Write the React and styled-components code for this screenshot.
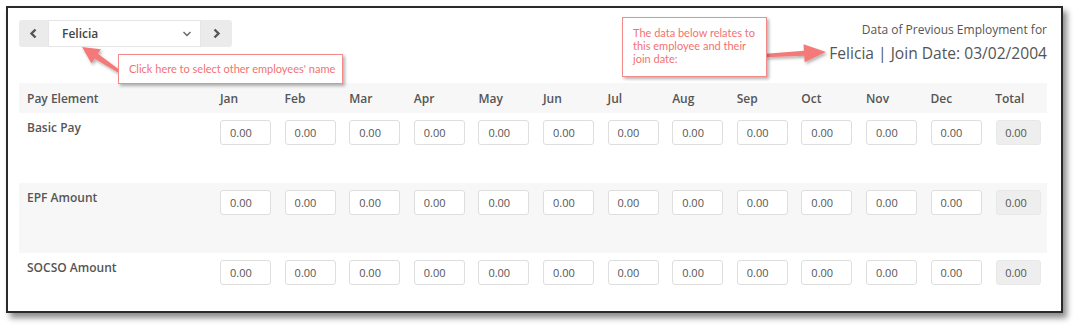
import styled, { createGlobalStyle } from "styled-components";

const GlobalStyle = createGlobalStyle`
  body {
    margin: 0;
    background: #fff;
    font-family: "Open Sans", "Noto Sans", sans-serif;
    color: #555;
  }
`;

const Page = styled.div`
  width: 1082px;
  height: 332px;
  padding: 6px 0 0 6px;
  box-sizing: border-box;
`;

const Frame = styled.div`
  position: relative;
  width: 1057px;
  height: 307px;
  box-sizing: border-box;
  border: 2px solid #2a2a2a;
  box-shadow: 4px 5px 6px rgba(0, 0, 0, 0.45);
  background: #fff;
  overflow: hidden;
  padding: 12px 14px 0 11px;
`;

const TopBar = styled.div`
  display: flex;
  justify-content: space-between;
  align-items: flex-start;
  height: 63px;
`;

const Picker = styled.div`
  display: flex;
  height: 27px;
`;

const NavButton = styled.button`
  width: ${(p) => p.$w}px;
  border: none;
  background: #ebebeb;
  border-radius: ${(p) => (p.$side === "left" ? "3px 0 0 3px" : "0 3px 3px 0")};
  display: flex;
  align-items: center;
  justify-content: center;
  padding: 0;
  color: #555;
`;

const Select = styled.div`
  width: 153px;
  box-sizing: border-box;
  border: 1px solid #e6e6e6;
  background: #fff;
  display: flex;
  align-items: center;
  justify-content: space-between;
  padding: 0 8px 0 13px;
  font-size: 12px;
  font-weight: 600;
  color: #444;
`;

const Heading = styled.div`
  text-align: right;
  padding-top: 1px;
`;

const HeadingSmall = styled.div`
  font-size: 12px;
  line-height: 17px;
  color: #555;
`;

const HeadingBig = styled.div`
  font-size: 15.6px;
  line-height: 22px;
  margin-top: 4px;
  color: #555;
`;

const Grid = styled.div`
  display: grid;
  grid-template-columns: 201px repeat(12, 64.6px) 1fr;
`;

const Row = styled.div`
  display: contents;
`;

const Cell = styled.div`
  background: ${(p) => p.$bg};
  height: ${(p) => p.$h}px;
  box-sizing: border-box;
  padding: ${(p) => (p.$head ? "0" : "7px 0 0 0")};
  display: flex;
  align-items: ${(p) => (p.$head ? "center" : "flex-start")};
  padding-left: ${(p) => (p.$label ? "8px" : "0")};
  font-size: 12px;
  font-weight: 600;
  color: #555;
`;

const LabelText = styled.span`
  line-height: 16px;
`;

const Amount = styled.div`
  width: ${(p) => (p.$total ? 45 : 51)}px;
  height: 25px;
  box-sizing: border-box;
  border: 1px solid ${(p) => (p.$total ? "#e8e8e8" : "#dedede")};
  border-radius: 3px;
  background: ${(p) => (p.$total ? "#eeeeee" : "#fff")};
  font-size: 11px;
  font-weight: 400;
  color: #555;
  display: flex;
  align-items: center;
  padding-left: ${(p) => (p.$total ? 8 : 9)}px;
  margin-left: ${(p) => (p.$total ? 1 : 0)}px;
`;

const Callout = styled.div`
  position: absolute;
  left: ${(p) => p.$x}px;
  top: ${(p) => p.$y}px;
  width: ${(p) => p.$w}px;
  height: ${(p) => p.$h}px;
  box-sizing: border-box;
  border: 1px solid #f48a8a;
  background: #fff;
  box-shadow: 2px 2px 3px rgba(0, 0, 0, 0.3);
  color: #f37272;
  font-family: "Lato", "Noto Sans", sans-serif;
  font-size: 11px;
  line-height: 13px;
  padding: ${(p) => p.$pad};
`;

const Overlay = styled.svg`
  position: absolute;
  left: 0;
  top: 0;
  pointer-events: none;
`;

const months = ["Jan", "Feb", "Mar", "Apr", "May", "Jun", "Jul", "Aug", "Sep", "Oct", "Nov", "Dec"];
const rows = [
  { name: "Basic Pay", bg: "#fff" },
  { name: "EPF Amount", bg: "#f7f7f7" },
  { name: "SOCSO Amount", bg: "#fff" },
];

// build a tapered arrow polygon from tail to tip
function arrowPoints(tx, ty, px, py, headLen, headW, tailW, neckW) {
  const len = Math.hypot(px - tx, py - ty);
  const dx = (px - tx) / len;
  const dy = (py - ty) / len;
  const nx = -dy;
  const ny = dx;
  const bx = px - dx * headLen;
  const by = py - dy * headLen;
  const pts = [
    [tx + nx * tailW, ty + ny * tailW],
    [bx + nx * neckW, by + ny * neckW],
    [bx + nx * headW, by + ny * headW],
    [px, py],
    [bx - nx * headW, by - ny * headW],
    [bx - nx * neckW, by - ny * neckW],
    [tx - nx * tailW, ty - ny * tailW],
  ];
  return pts.map((p) => p.map((v) => v.toFixed(1)).join(",")).join(" ");
}

function Chevron({ dir }) {
  const d = dir === "left" ? "M6.5 1.5 L2.5 5.5 L6.5 9.5" : dir === "right" ? "M2.5 1.5 L6.5 5.5 L2.5 9.5" : "M1.5 3 L5 6.5 L8.5 3";
  return (
    <svg width={dir === "down" ? 10 : 9} height="11" viewBox={dir === "down" ? "0 0 10 9" : "0 0 9 11"}>
      <path d={d} fill="none" stroke={dir === "down" ? "#666" : "#555"} strokeWidth={dir === "down" ? 1.4 : 2.4} />
    </svg>
  );
}

export default function App() {
  return (
    <Page>
      <GlobalStyle />
      <Frame>
        <TopBar>
          <Picker>
            <NavButton $w={29} $side="left">
              <Chevron dir="left" />
            </NavButton>
            <Select>
              Felicia
              <Chevron dir="down" />
            </Select>
            <NavButton $w={31} $side="right">
              <Chevron dir="right" />
            </NavButton>
          </Picker>
          <Heading>
            <HeadingSmall>Data of Previous Employment for</HeadingSmall>
            <HeadingBig>Felicia | Join Date: 03/02/2004</HeadingBig>
          </Heading>
        </TopBar>

        <Grid>
          <Row>
            <Cell $head $label $bg="#f7f7f7" $h={30}>Pay Element</Cell>
            {months.map((m) => (
              <Cell key={m} $head $bg="#f7f7f7" $h={30}>{m}</Cell>
            ))}
            <Cell $head $bg="#f7f7f7" $h={30}>Total</Cell>
          </Row>
          {rows.map((r) => (
            <Row key={r.name}>
              <Cell $label $bg={r.bg} $h={70}>
                <LabelText>{r.name}</LabelText>
              </Cell>
              {months.map((m) => (
                <Cell key={m} $bg={r.bg} $h={70}>
                  <Amount>0.00</Amount>
                </Cell>
              ))}
              <Cell $bg={r.bg} $h={70}>
                <Amount $total>0.00</Amount>
              </Cell>
            </Row>
          ))}
        </Grid>

        <Overlay width="1053" height="303">
          <defs>
            <filter id="sh" x="-20%" y="-20%" width="140%" height="160%">
              <feDropShadow dx="1.5" dy="2" stdDeviation="1.5" floodColor="#000" floodOpacity="0.3" />
            </filter>
          </defs>
          <polygon points={arrowPoints(112, 64, 74, 39, 17, 8.5, 1.5, 3)} fill="#f47a7a" filter="url(#sh)" />
          <polygon points={arrowPoints(758, 47.5, 818, 44, 22, 9, 1.8, 2.5)} fill="#f47a7a" filter="url(#sh)" />
        </Overlay>

        <Callout $x={110} $y={46} $w={225} $h={30} $pad="7px 0 0 10px">
          Click here to select other employees' name
        </Callout>
        <Callout $x={614} $y={9} $w={145} $h={60} $pad="8px 6px 0 10px">
          The data below relates to this employee and their join date:
        </Callout>
      </Frame>
    </Page>
  );
}
